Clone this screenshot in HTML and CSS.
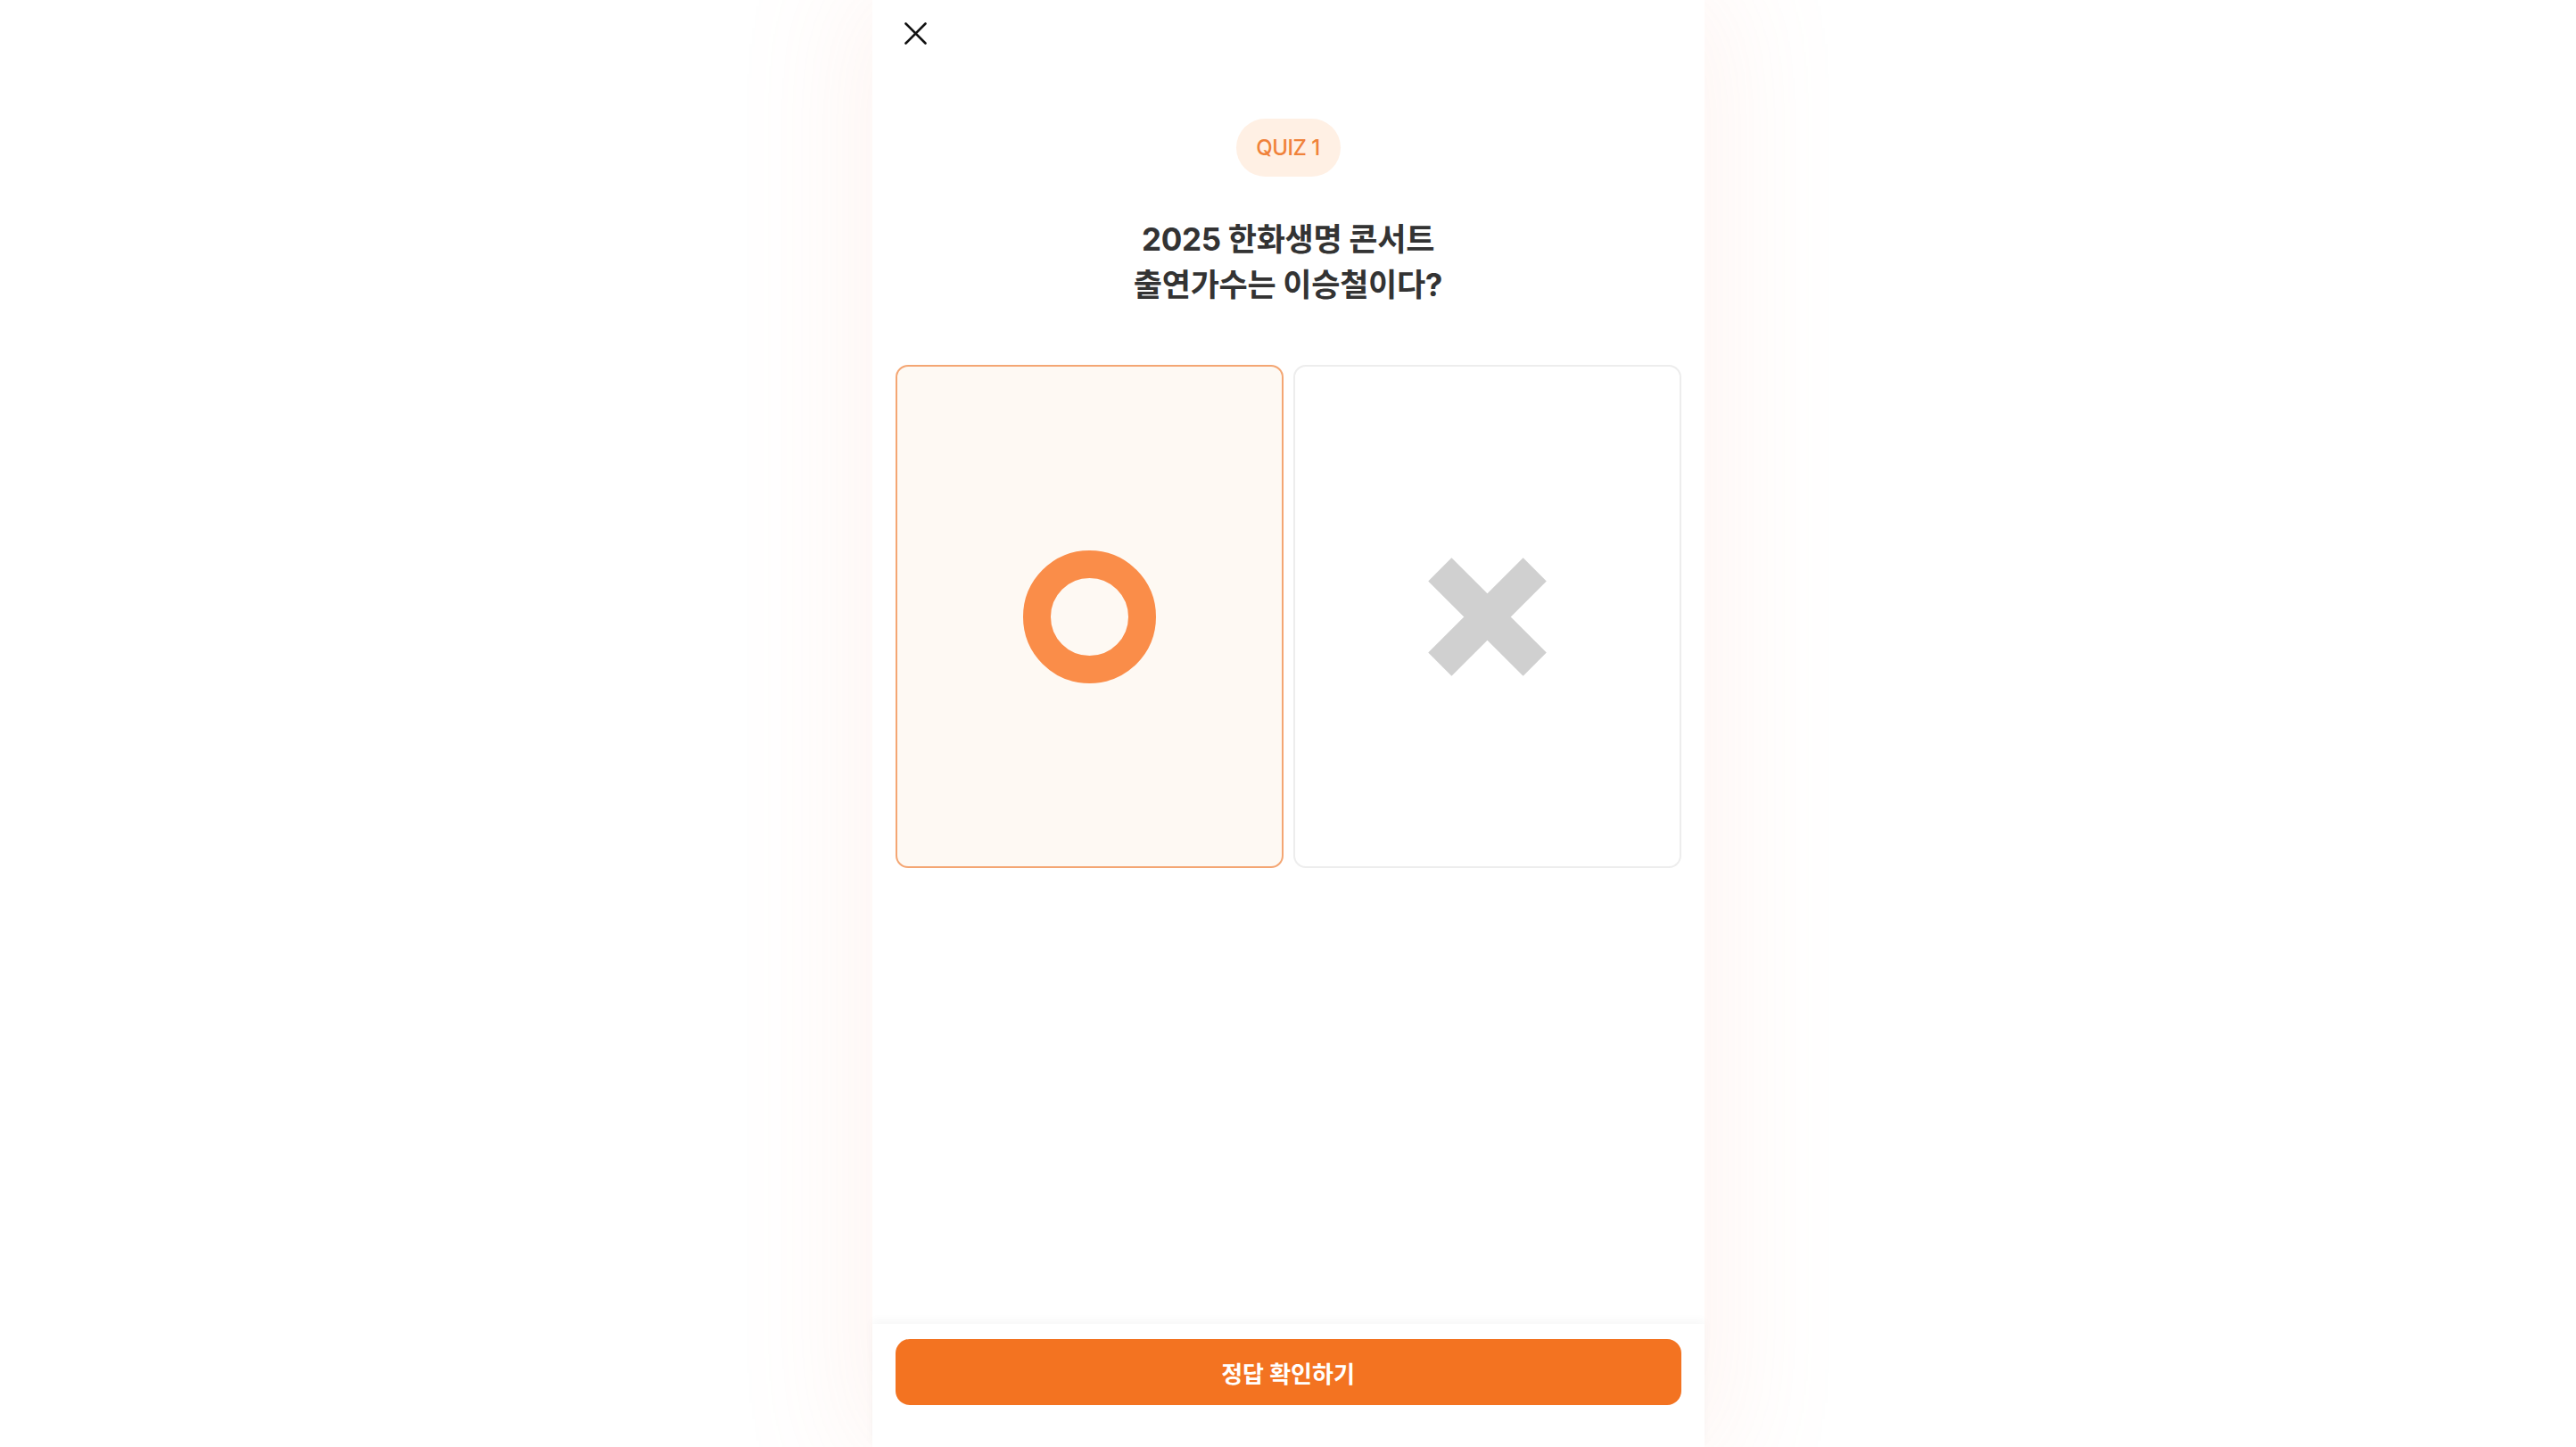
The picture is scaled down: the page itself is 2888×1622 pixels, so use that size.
FILE: index.html
```html
<!DOCTYPE html>
<html lang="ko">
<head>
<meta charset="utf-8">
<title>QUIZ 1</title>
<link rel="stylesheet" href="styles.css">
</head>
<body>
<div class="page">
  <main class="panel">
    <header class="header">
      <button class="close" aria-label="닫기">
        <svg viewBox="0 0 25 25" width="25" height="25"><path d="M1.5 1.5 L23.5 23.5 M23.5 1.5 L1.5 23.5" stroke="#111" stroke-width="2.6" stroke-linecap="round" fill="none"/></svg>
      </button>
    </header>
    <section class="content">
      <div class="badge">QUIZ 1</div>
      <h1 class="title">2025 한화생명 콘서트<br>출연가수는 이승철이다?</h1>
      <div class="choices">
        <div class="choice selected">
          <svg viewBox="0 0 149 149" width="149" height="149"><circle cx="74.5" cy="74.5" r="59" stroke="#FA8D49" stroke-width="31" fill="none"/></svg>
        </div>
        <div class="choice">
          <svg viewBox="0 0 133 133" width="133" height="133"><path d="M13.3 13.3 L119.7 119.7 M119.7 13.3 L13.3 119.7" stroke="#D0D0D0" stroke-width="37" fill="none"/></svg>
        </div>
      </div>
    </section>
    <footer class="bar">
      <button class="submit">정답 확인하기</button>
    </footer>
  </main>
</div>
</body>
</html>
```
FILE: styles.css
```css
* { box-sizing: border-box; }
html, body { margin: 0; padding: 0; height: 100%; }
body {
  background: #ffffff;
  font-family: Inter, "Noto Sans CJK KR", sans-serif;
  color: #333333;
  overflow: hidden;
}
.page {
  display: flex;
  justify-content: center;
  height: 100vh;
}
.panel {
  width: 933px;
  height: 100vh;
  background: #ffffff;
  display: flex;
  flex-direction: column;
  box-shadow: 0 0 130px 20px rgba(250, 150, 120, 0.1);
}
.header {
  padding: 25px 36px 0;
  height: 74px;
  flex-shrink: 0;
}
.close {
  border: 0;
  background: none;
  padding: 0;
  width: 25px;
  height: 25px;
  display: block;
  cursor: pointer;
}
.close svg { display: block; }
.content {
  flex: 1;
  display: flex;
  flex-direction: column;
  align-items: center;
  padding: 59px 26px 0;
}
.badge {
  width: 117px;
  height: 65px;
  border-radius: 33px;
  background: #FFF0E4;
  color: #F0823A;
  font-size: 24px;
  font-weight: 500;
  letter-spacing: -0.5px;
  display: flex;
  align-items: center;
  justify-content: center;
}
.title {
  margin: 45px 0 0;
  font-size: 35px;
  line-height: 51px;
  font-weight: 700;
  text-align: center;
  color: #333333;
  letter-spacing: -0.3px;
}
.choices {
  margin-top: 64px;
  width: 100%;
  display: grid;
  grid-template-columns: 1fr 1fr;
  gap: 11px;
}
.choice {
  height: 564px;
  border: 2px solid #EDEDED;
  border-radius: 14px;
  background: #ffffff;
  display: flex;
  align-items: center;
  justify-content: center;
}
.choice.selected {
  border-color: #F4A673;
  background: #FEF9F3;
}
.bar {
  flex-shrink: 0;
  padding: 17px 26px 47px;
  background: #ffffff;
  box-shadow: 0 -4px 10px rgba(0, 0, 0, 0.035);
}
.submit {
  width: 100%;
  height: 74px;
  border: 0;
  border-radius: 16px;
  background: #F37321;
  color: #ffffff;
  font-family: Inter, "Noto Sans CJK KR", sans-serif;
  font-size: 26px;
  font-weight: 700;
  cursor: pointer;
}
```
